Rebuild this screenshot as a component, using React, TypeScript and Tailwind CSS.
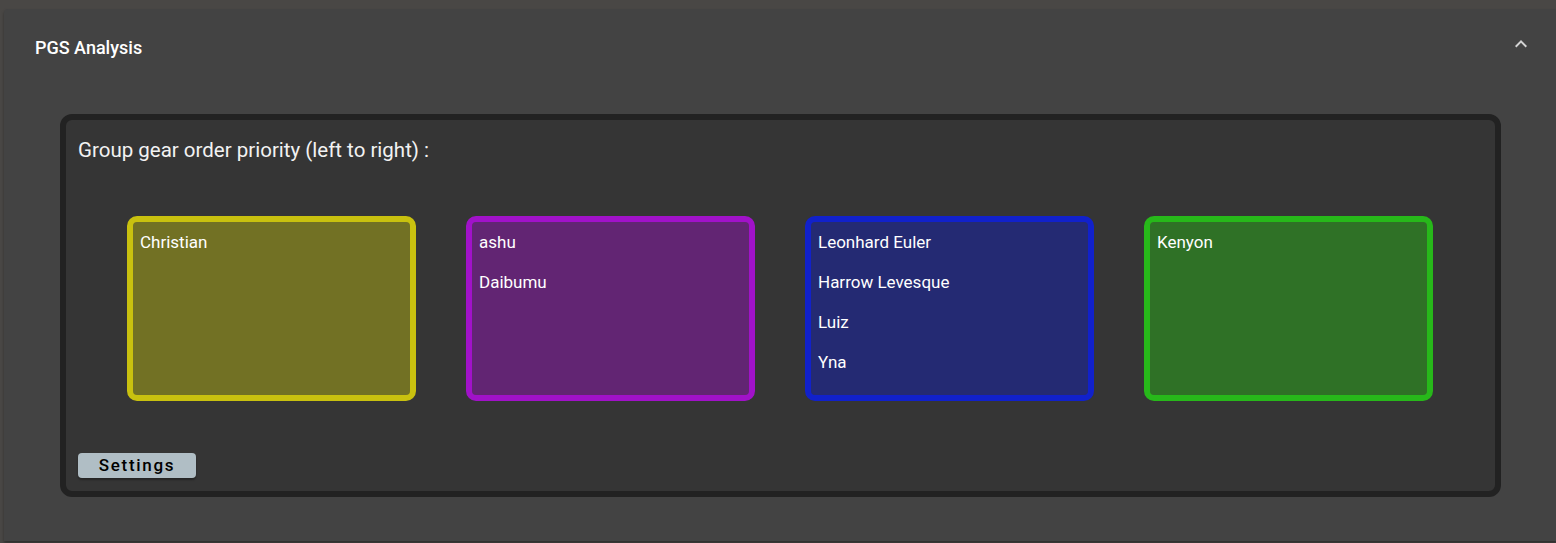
const groups = [
    { border: "border-[#c9c10f]", bg: "bg-[#727124]", names: ["Christian"] },
    { border: "border-[#a112c9]", bg: "bg-[#622573]", names: ["ashu", "Daibumu"] },
    { border: "border-[#1121cb]", bg: "bg-[#242a73]", names: ["Leonhard Euler", "Harrow Levesque", "Luiz", "Yna"] },
    { border: "border-[#27b81a]", bg: "bg-[#2f7126]", names: ["Kenyon"] },
];

export default function App() {
    return (
        <div className="h-[543px] w-[1556px] overflow-hidden bg-[#494745] pl-1 pt-[9px] font-['Roboto',sans-serif]">
            <div className="h-[532px] w-[1553px] rounded-t bg-[#434343] shadow-[0_2px_3px_rgba(0,0,0,0.35)]">
                <div className="flex h-[78px] items-center justify-between pl-[31px] pr-[24px]">
                    <h2 className="text-lg font-medium text-white">PGS Analysis</h2>
                    <svg className="mt-[-8px] h-6 w-6 text-[#d4d4d4]" viewBox="0 0 24 24" fill="currentColor">
                        <path d="M12 8l-6 6 1.41 1.41L12 10.83l4.59 4.58L18 14z" />
                    </svg>
                </div>
                <div className="ml-14 mt-[27px] flex h-[383px] w-[1441px] flex-col rounded-xl border-[6px] border-[#222222] bg-[#353535] px-3 pt-4 pb-[13px]">
                    <p className="text-[20.5px] leading-[28px] text-[#f2f2f2]">Group gear order priority (left to right) :</p>
                    <div className="mt-[52px] flex justify-center gap-[50px] pr-px">
                        {groups.map((g, i) => (
                            <div
                                key={i}
                                className={`h-[185px] w-[289px] rounded-[10px] border-[6px] ${g.border} ${g.bg} flex flex-col gap-4 px-[7px] pt-[8px]`}
                            >
                                {g.names.map((n) => (
                                    <span key={n} className="text-[17px] leading-6 text-white">{n}</span>
                                ))}
                            </div>
                        ))}
                    </div>
                    <div className="mt-auto">
                        <button className="h-[25px] w-[118px] rounded bg-[#b0bec5] text-[17px] font-medium leading-none tracking-[0.1em] text-black shadow-[0_2px_2px_rgba(0,0,0,0.3)]">
                            Settings
                        </button>
                    </div>
                </div>
            </div>
        </div>
    );
}
